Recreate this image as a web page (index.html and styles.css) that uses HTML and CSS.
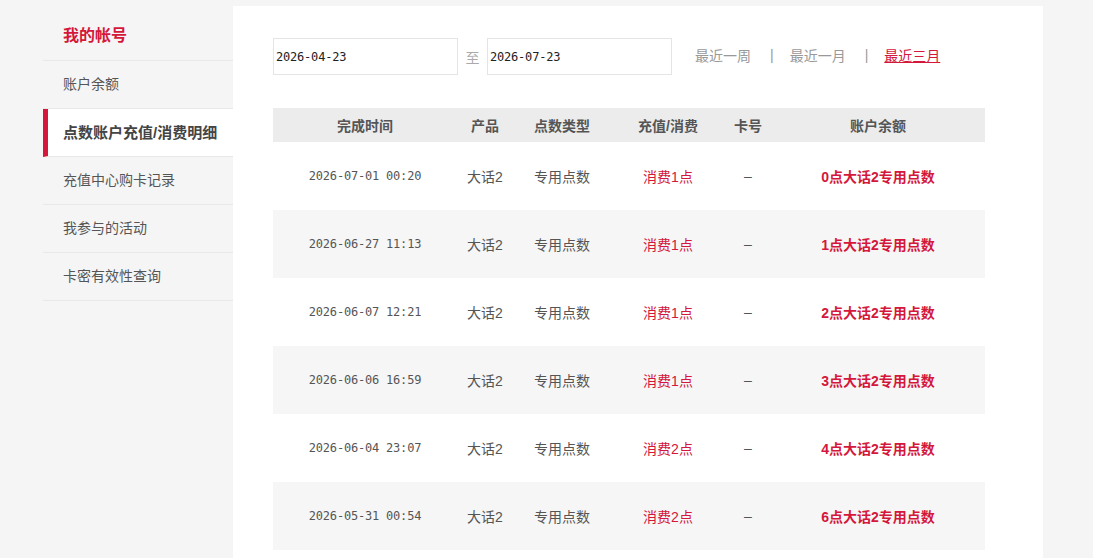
FILE: index.html
```html
<!DOCTYPE html>
<html lang="zh-CN">
<head>
  <meta charset="UTF-8" />
  <title>点数账户充值/消费明细</title>
  <link rel="stylesheet" href="styles.css">
</head>
<body>
  <div class="wrap">
    <aside class="side">
      <div class="side-title">我的帐号</div>
      <a href="#" class="side-item">账户余额</a>
      <a href="#" class="side-item active">点数账户充值/消费明细</a>
      <a href="#" class="side-item">充值中心购卡记录</a>
      <a href="#" class="side-item">我参与的活动</a>
      <a href="#" class="side-item">卡密有效性查询</a>
    </aside>

    <main class="panel">
      <div class="filter">
        <input class="date" type="text" value="2026-04-23">
        <span class="to">至</span>
        <input class="date" type="text" value="2026-07-23">
        <div class="quick">
          <a href="#">最近一周</a>
          <span class="sep">|</span>
          <a href="#">最近一月</a>
          <span class="sep">|</span>
          <a href="#" class="on">最近三月</a>
        </div>
      </div>

      <table class="list">
        <thead>
          <tr>
            <th class="c-time">完成时间</th>
            <th class="c-prod">产品</th>
            <th class="c-type">点数类型</th>
            <th class="c-op">充值/消费</th>
            <th class="c-card">卡号</th>
            <th class="c-bal">账户余额</th>
          </tr>
        </thead>
        <tbody>
          <tr>
            <td class="mono">2026-07-01 00:20</td>
            <td>大话2</td>
            <td>专用点数</td>
            <td class="red">消费1点</td>
            <td>–</td>
            <td class="red strong">0点大话2专用点数</td>
          </tr>
          <tr>
            <td class="mono">2026-06-27 11:13</td>
            <td>大话2</td>
            <td>专用点数</td>
            <td class="red">消费1点</td>
            <td>–</td>
            <td class="red strong">1点大话2专用点数</td>
          </tr>
          <tr>
            <td class="mono">2026-06-07 12:21</td>
            <td>大话2</td>
            <td>专用点数</td>
            <td class="red">消费1点</td>
            <td>–</td>
            <td class="red strong">2点大话2专用点数</td>
          </tr>
          <tr>
            <td class="mono">2026-06-06 16:59</td>
            <td>大话2</td>
            <td>专用点数</td>
            <td class="red">消费1点</td>
            <td>–</td>
            <td class="red strong">3点大话2专用点数</td>
          </tr>
          <tr>
            <td class="mono">2026-06-04 23:07</td>
            <td>大话2</td>
            <td>专用点数</td>
            <td class="red">消费2点</td>
            <td>–</td>
            <td class="red strong">4点大话2专用点数</td>
          </tr>
          <tr>
            <td class="mono">2026-05-31 00:54</td>
            <td>大话2</td>
            <td>专用点数</td>
            <td class="red">消费2点</td>
            <td>–</td>
            <td class="red strong">6点大话2专用点数</td>
          </tr>
        </tbody>
      </table>
    </main>
  </div>
</body>
</html>
```

FILE: styles.css
```css
body {
  margin: 0;
  background-color: #f5f5f5;
  color: #555;
  font-family: "Liberation Sans", "Noto Sans CJK SC", sans-serif;
  font-size: 14px;
}

.wrap {
  display: flex;
  align-items: flex-start;
  width: 1000px;
  margin: 6px 0 0 43px;
}

/* 左侧菜单 */
.side {
  width: 190px;
  flex-shrink: 0;
}

.side-title {
  height: 54px;
  line-height: 60px;
  padding-left: 20px;
  color: #d4173b;
  font-size: 16px;
  font-weight: bold;
  border-bottom: 1px solid #e8e8e8;
}

.side-item {
  display: block;
  height: 47px;
  line-height: 47px;
  padding-left: 20px;
  color: #555;
  text-decoration: none;
  border-bottom: 1px solid #e8e8e8;
  white-space: nowrap;
}

.side-item.active {
  background-color: #fff;
  border-left: 5px solid #d4173b;
  padding-left: 15px;
  font-weight: bold;
  color: #444;
  font-size: 15px;
}

/* 右侧内容 */
.panel {
  width: 810px;
  min-height: 560px;
  background-color: #fff;
  padding: 32px 0 0 40px;
  box-sizing: border-box;
}

.filter {
  display: flex;
  align-items: center;
  height: 37px;
}

.date {
  width: 185px;
  height: 37px;
  box-sizing: border-box;
  border: 1px solid #e5e5e5;
  padding: 0 2px;
  font-family: "DejaVu Sans Mono", monospace;
  font-size: 12px;
  letter-spacing: -0.2px;
  color: #222;
  outline: none;
}

.to {
  width: 29px;
  text-align: center;
  color: #aaa;
}

.quick {
  margin-left: 23px;
  margin-top: -4px;
  display: flex;
  align-items: center;
}

.quick a {
  color: #999;
  text-decoration: none;
}

.quick .sep {
  color: #999;
  margin: 0 16px 0 19px;
}

.quick a.on {
  color: #d4173b;
  text-decoration: underline;
}

.list {
  width: 712px;
  margin-top: 33px;
  border-collapse: collapse;
  text-align: center;
}

.list th {
  height: 34px;
  padding: 0;
  background-color: #ececec;
  color: #555;
  font-size: 14px;
  font-weight: bold;
}

.list td {
  height: 68px;
  padding: 0;
  color: #555;
}

.list tbody tr:nth-child(even) td {
  background-color: #f6f6f6;
}

.c-time { width: 184px; }
.c-prod { width: 56px; }
.c-type { width: 98px; }
.c-op { width: 114px; }
.c-card { width: 46px; }
.c-bal { width: 214px; }

.mono {
  font-family: "DejaVu Sans Mono", monospace;
  font-size: 12px;
  letter-spacing: -0.2px;
}

.red {
  color: #d4173b !important;
}

.strong {
  font-weight: bold;
}
```
